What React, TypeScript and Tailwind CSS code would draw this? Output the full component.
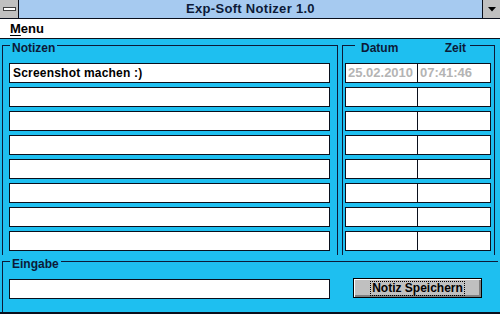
const rows = [
  { note: "Screenshot machen :)", date: "25.02.2010", time: "07:41:46" },
  { note: "", date: "", time: "" },
  { note: "", date: "", time: "" },
  { note: "", date: "", time: "" },
  { note: "", date: "", time: "" },
  { note: "", date: "", time: "" },
  { note: "", date: "", time: "" },
  { note: "", date: "", time: "" },
];

function Field({ text, className = "" }: { text?: string; className?: string }) {
  return (
    <div className={`h-[20px] bg-white border border-[#0a0f1c] flex items-center pl-[3px] text-[12px] font-bold text-black tracking-[0.2px] ${className}`}>
      {text}
    </div>
  );
}

export default function App() {
  return (
    <div className="w-[500px] h-[314px] bg-[#1ebff0] flex flex-col overflow-hidden font-['Liberation_Sans',Arial,sans-serif] text-[#0c1a38]">
      {/* title bar */}
      <div className="h-[19px] flex bg-[#a6caf0] border-b border-[#0a0f1c]">
        <div className="w-[19px] bg-[#c0c0c0] border-r border-[#0a0f1c] flex items-center justify-center">
          <div className="w-[13px] h-[4px] bg-white border border-[#404040]" />
        </div>
        <div className="flex-1 flex items-center justify-center text-[13px] font-bold tracking-[0.3px]">
          Exp-Soft Notizer 1.0
        </div>
        <div className="w-[18px] bg-[#c0c0c0] border-l border-[#0a0f1c] flex items-center justify-center">
          <svg width="8" height="5" viewBox="0 0 8 5">
            <path d="M0 0 H8 L4 4.5 Z" fill="#000" />
          </svg>
        </div>
      </div>

      {/* menu bar */}
      <div className="h-[20px] bg-white border-b border-[#0a0f1c] flex items-center pl-[10px] text-[13px] font-bold text-black">
        <span>
          <span className="underline underline-offset-2">M</span>enu
        </span>
      </div>

      {/* body */}
      <div className="flex-1 flex flex-col pl-[2px] pt-[6px] border-b-2 border-[#0a0f1c]">
        <div className="flex gap-[4px]">
          {/* notes group */}
          <div className="relative w-[336px] h-[210px] border-t border-l border-r border-[#0c1a38] pt-[17px] pl-[6px] pr-[7px] flex flex-col gap-[4px]">
            <span className="absolute left-[7px] top-[-4px] bg-[#1ebff0] px-[2px] text-[12px] font-bold leading-[13px]">
              Notizen
            </span>
            {rows.map((r, i) => (
              <Field key={i} text={r.note} />
            ))}
          </div>

          {/* date/time group */}
          <div className="relative w-[153px] h-[210px] border-t border-l border-r border-[#0c1a38] pt-[17px] pl-[2px] pr-[3px] flex flex-col gap-[4px]">
            <div className="absolute left-[12px] right-[24px] top-[-4px] bg-[#1ebff0] flex text-[12px] font-bold leading-[13px]">
              <span className="pl-[6px]">Datum</span>
              <span className="ml-auto pr-[4px]">Zeit</span>
            </div>
            {rows.map((r, i) => (
              <div key={i} className="h-[20px] flex bg-white border border-[#0a0f1c] text-[13px] font-bold text-[#b4b4b4]">
                <div className="w-[72px] border-r border-[#0a0f1c] flex items-center pl-[2px]">{r.date}</div>
                <div className="flex-1 flex items-center pl-[2px]">{r.time}</div>
              </div>
            ))}
          </div>
        </div>

        {/* input group */}
        <div className="relative mt-[6px] w-[496px] flex-1 border-t border-l border-[#0c1a38] pt-[17px] pl-[6px] flex items-start">
          <span className="absolute left-[7px] top-[-4px] bg-[#1ebff0] px-[2px] text-[12px] font-bold leading-[13px]">
            Eingabe
          </span>
          <Field className="w-[321px]" />
          <button className="ml-[23px] mt-[-1px] w-[129px] h-[20px] bg-[#c0c0c0] border border-black shadow-[inset_1px_1px_0_#fff,inset_-2px_-2px_0_#808080] flex items-center justify-center text-[12px] font-bold text-black">
            <span className="border border-dotted border-black px-[1px] leading-[13px]">Notiz Speichern</span>
          </button>
        </div>
      </div>
    </div>
  );
}
